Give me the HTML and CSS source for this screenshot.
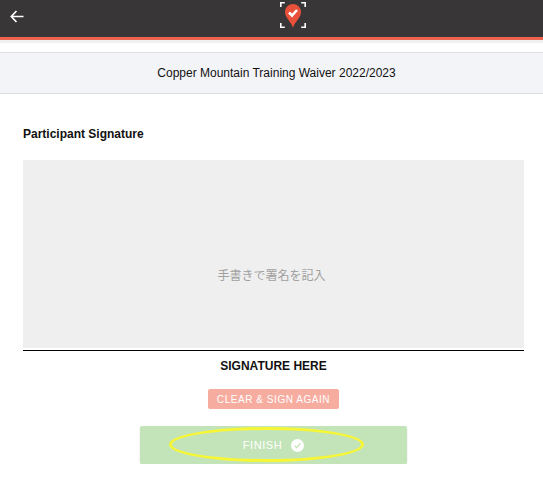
FILE: index.html
```html
<!DOCTYPE html>
<html lang="en">
<head>
    <meta charset="utf-8">
    <title>Signature</title>
    <link rel="stylesheet" href="styles.css">
</head>

<body>
    <header class="topbar">
        <svg class="back" width="14" height="13" viewBox="0 0 14 13" aria-hidden="true">
            <path d="M6.500 1 1.300 6.500 6.500 12M1.500 6.500h12" fill="none" stroke="#fff" stroke-width="1.700"/>
        </svg>
        <svg class="logo" width="26" height="26" viewBox="0 0 26 26" aria-hidden="true">
            <path d="M.8 5V.8h4M21.200.8h4V5M.8 21v4.200h4M21.200 25.200h4V21" fill="none" stroke="#fff" stroke-width="1.600"/>
            <path d="M13 26C11.500 20 5 16 5 10a8 8 0 0 1 16 0C21 16 14.500 20 13 26Z" fill="#e8503a"/>
            <path d="M9 10.500 12 13.500 17 8" fill="none" stroke="#fff" stroke-width="2.600"/>
        </svg>
    </header>

    <div class="title-band">Copper Mountain Training Waiver 2022/2023</div>

    <main class="content">
        <h2 class="label">Participant Signature</h2>
        <div class="sign-box">手書きで署名を記入</div>
        <p class="sign-here">SIGNATURE HERE</p>
        <button class="btn btn-clear">CLEAR &amp; SIGN AGAIN</button>
        <div class="finish-wrap">
            <button class="btn btn-finish">
                FINISH
                <svg width="13" height="13" viewBox="0 0 13 13" aria-hidden="true">
                    <circle cx="6.500" cy="6.500" r="6.500" fill="#fff"/>
                    <path d="M3.800 6.700 5.700 8.600 9.300 4.500" fill="none" stroke="#c3e4b9" stroke-width="1.300"/>
                </svg>
            </button>
            <div class="highlight"></div>
        </div>
    </main>
</body></html>
```

FILE: styles.css
```css
* {
    box-sizing: border-box;
}

body {
    margin: 0;
    background-color: #fff;
    font-family: "Liberation Sans", Arial, sans-serif;
    color: #111;
}

.topbar {
    display: flex;
    justify-content: center;
    position: relative;
    height: 43px;
    padding-top: 2px;
    background-color: #383637;
    border-bottom: 3px solid #f0f0f0;
    box-shadow: inset 0 -3px 0 #ee6350;
}

.back {
    position: absolute;
    left: 10px;
    top: 10px;
}

.logo {
    margin-left: 43px;
}

.title-band {
    display: flex;
    align-items: center;
    justify-content: center;
    height: 42px;
    margin-top: 9px;
    padding-left: 10px;
    background-color: #f3f4f8;
    border-top: 1px solid #dddddf;
    border-bottom: 1px solid #dddddf;
    font-size: 12px;
}

.content {
    display: flex;
    flex-direction: column;
    align-items: center;
    padding: 0 19px 0 23px;
}

.label {
    align-self: flex-start;
    margin: 33px 0 0;
    font-size: 12px;
    line-height: 14px;
}

.sign-box {
    display: flex;
    align-items: center;
    justify-content: center;
    width: 100%;
    height: 188px;
    margin-top: 19px;
    padding: 40px 4px 0 0;
    background-color: #efefef;
    font-family: "Noto Sans CJK JP", sans-serif;
    font-size: 12px;
    color: #a0a0a0;
}

.sign-here {
    width: 100%;
    margin: 2px 0 0;
    padding-top: 8px;
    border-top: 1px solid #000;
    text-align: center;
    font-size: 12px;
    line-height: 14px;
    font-weight: bold;
}

.btn {
    border: 0;
    color: #fff;
    font-family: "Liberation Sans", Arial, sans-serif;
}

.btn-clear {
    width: 131px;
    height: 20px;
    margin-top: 16px;
    padding: 0;
    background-color: #f7aca0;
    border-radius: 2px;
    font-size: 10px;
    letter-spacing: 0.55px;
}

.finish-wrap {
    position: relative;
    margin-top: 17px;
}

.btn-finish {
    display: flex;
    align-items: center;
    justify-content: center;
    gap: 9px;
    width: 267px;
    height: 38px;
    padding: 0;
    background-color: #c3e4b9;
    border-radius: 2px;
    box-shadow: 0 1px 2px rgba(0, 0, 0, 0.12);
    font-size: 11px;
    letter-spacing: 0.6px;
}

.highlight {
    position: absolute;
    left: 29px;
    top: 1px;
    width: 195px;
    height: 35px;
    border: 3px solid #f6f536;
    border-radius: 50%;
}
```
